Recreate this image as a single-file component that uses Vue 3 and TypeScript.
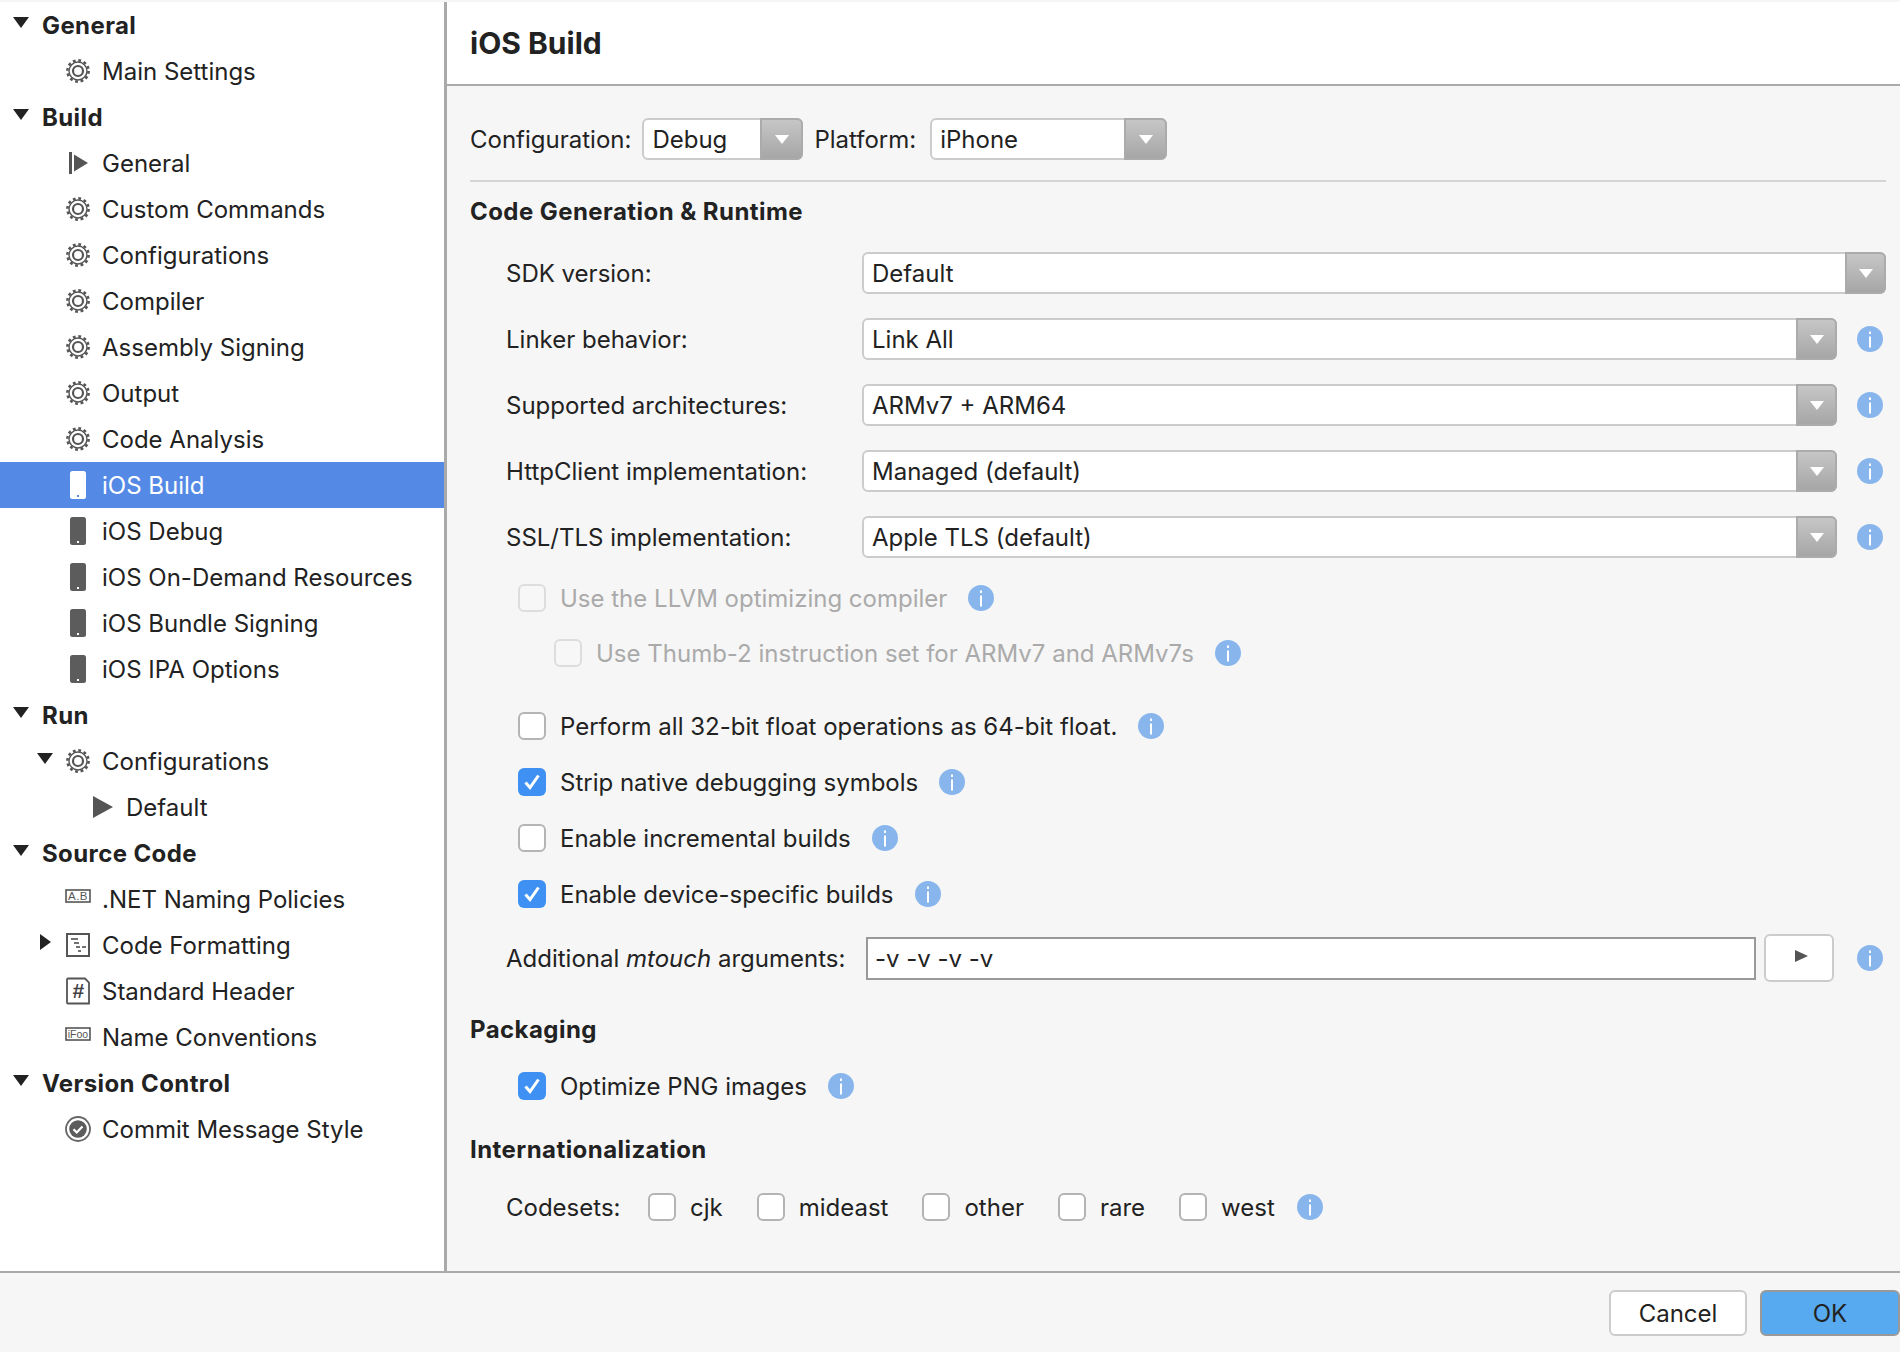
<script setup lang="ts">
type Kind = 'gear' | 'build' | 'phone' | 'play' | 'ab' | 'fmt' | 'hash' | 'foo' | 'commit'
interface Row {
  label: string
  head?: boolean
  icon?: Kind
  caret?: 'down' | 'right'
  selected?: boolean
  deep?: boolean
}
const tree: Row[] = [
  { label: 'General', head: true },
  { label: 'Main Settings', icon: 'gear' },
  { label: 'Build', head: true },
  { label: 'General', icon: 'build' },
  { label: 'Custom Commands', icon: 'gear' },
  { label: 'Configurations', icon: 'gear' },
  { label: 'Compiler', icon: 'gear' },
  { label: 'Assembly Signing', icon: 'gear' },
  { label: 'Output', icon: 'gear' },
  { label: 'Code Analysis', icon: 'gear' },
  { label: 'iOS Build', icon: 'phone', selected: true },
  { label: 'iOS Debug', icon: 'phone' },
  { label: 'iOS On-Demand Resources', icon: 'phone' },
  { label: 'iOS Bundle Signing', icon: 'phone' },
  { label: 'iOS IPA Options', icon: 'phone' },
  { label: 'Run', head: true },
  { label: 'Configurations', icon: 'gear', caret: 'down' },
  { label: 'Default', icon: 'play', deep: true },
  { label: 'Source Code', head: true },
  { label: '.NET Naming Policies', icon: 'ab' },
  { label: 'Code Formatting', icon: 'fmt', caret: 'right' },
  { label: 'Standard Header', icon: 'hash' },
  { label: 'Name Conventions', icon: 'foo' },
  { label: 'Version Control', head: true },
  { label: 'Commit Message Style', icon: 'commit' },
]
const selects = [
  { label: 'SDK version:', value: 'Default', info: false },
  { label: 'Linker behavior:', value: 'Link All', info: true },
  { label: 'Supported architectures:', value: 'ARMv7 + ARM64', info: true },
  { label: 'HttpClient implementation:', value: 'Managed (default)', info: true },
  { label: 'SSL/TLS implementation:', value: 'Apple TLS (default)', info: true },
]
const checks = [
  { label: 'Perform all 32-bit float operations as 64-bit float.', on: false },
  { label: 'Strip native debugging symbols', on: true },
  { label: 'Enable incremental builds', on: false },
  { label: 'Enable device-specific builds', on: true },
]
const codesets = ['cjk', 'mideast', 'other', 'rare', 'west']
</script>

<template>
  <div class="app">
    <div class="strip"></div>
    <div class="body">
      <nav class="side">
        <div
          v-for="(r, i) in tree"
          :key="i"
          class="row"
          :class="{ head: r.head, sel: r.selected, child: !r.head && !r.caret && !r.deep, withcaret: r.caret, deep: r.deep }"
        >
          <svg v-if="r.head || r.caret === 'down'" class="caret" viewBox="0 0 16 11"><path d="M0 0h16L8 11z" /></svg>
          <svg v-else-if="r.caret === 'right'" class="caret caret-r" viewBox="0 0 11 16"><path d="M0 0l11 8L0 16z" /></svg>

          <svg v-if="r.icon === 'gear'" class="ic" viewBox="0 0 26 26">
            <circle cx="13" cy="13" r="10.6" fill="none" stroke="#555" stroke-width="2.6" stroke-dasharray="2.8 2.75" />
            <circle cx="13" cy="13" r="9" fill="#fff" stroke="#555" stroke-width="1.4" />
            <circle cx="13" cy="13" r="5" fill="none" stroke="#555" stroke-width="2.2" />
          </svg>
          <svg v-else-if="r.icon === 'build'" class="ic" viewBox="0 0 26 26">
            <rect x="4" y="2" width="3" height="22" fill="#555" />
            <path d="M9 4.5L23 13L9 21.5z" fill="#555" />
          </svg>
          <svg v-else-if="r.icon === 'phone'" class="ic ic-phone" viewBox="0 0 16 28">
            <rect width="16" height="28" rx="2.5" :fill="r.selected ? '#fff' : '#5c5c5c'" />
            <rect x="7" y="24" width="2" height="2" :fill="r.selected ? '#548ae6' : '#fff'" />
          </svg>
          <svg v-else-if="r.icon === 'play'" class="ic-play" viewBox="0 0 20 22"><path d="M0 0l20 11L0 22z" fill="#555" /></svg>
          <svg v-else-if="r.icon === 'ab'" class="ic ic-wide" viewBox="0 0 26 14">
            <rect x="1" y="1" width="24" height="12" fill="#fff" stroke="#555" stroke-width="1.6" />
            <text x="13" y="11" text-anchor="middle" class="tiny">A.B</text>
          </svg>
          <svg v-else-if="r.icon === 'foo'" class="ic ic-wide" viewBox="0 0 26 14">
            <rect x="1" y="1" width="24" height="12" fill="#fff" stroke="#555" stroke-width="1.6" />
            <text x="13" y="10.500" text-anchor="middle" class="tiny tiny-foo">iFoo</text>
          </svg>
          <svg v-else-if="r.icon === 'fmt'" class="ic" viewBox="0 0 26 26">
            <rect x="2" y="2" width="22" height="22" fill="#fff" stroke="#555" stroke-width="2" />
            <path d="M6 7h7M9 11h5M11 15h4M17 15h4M13 19h3" stroke="#444" stroke-width="1.6" fill="none" />
          </svg>
          <svg v-else-if="r.icon === 'hash'" class="ic ic-doc" viewBox="0 0 26 28">
            <path d="M3 1.5h17l4 4v21H3a1 1 0 0 1-1-1V2.500a1 1 0 0 1 1-1z" fill="#fff" stroke="#555" stroke-width="1.8" />
            <text x="13" y="21" text-anchor="middle" class="hash">#</text>
          </svg>
          <svg v-else-if="r.icon === 'commit'" class="ic" viewBox="0 0 26 26">
            <circle cx="13" cy="13" r="12" fill="#fff" stroke="#666" stroke-width="1.8" />
            <circle cx="13" cy="13" r="8.8" fill="#5c5c5c" />
            <path d="M8.500 13.200l3.200 3.200 5.800-6" fill="none" stroke="#fff" stroke-width="2.200" />
          </svg>

          <span class="txt">{{ r.label }}</span>
        </div>
      </nav>

      <main class="main">
        <header class="title">iOS Build</header>

        <div class="toolbar">
          <span>Configuration:</span>
          <div class="select sel-debug">
            <span class="val">Debug</span>
            <span class="arrow"><i></i></span>
          </div>
          <span class="plat">Platform:</span>
          <div class="select sel-iphone">
            <span class="val">iPhone</span>
            <span class="arrow"><i></i></span>
          </div>
        </div>
        <hr class="divider" />

        <h2 class="section first">Code Generation &amp; Runtime</h2>
        <div class="selects">
          <div v-for="s in selects" :key="s.label" class="srow">
            <label>{{ s.label }}</label>
            <div class="select" :class="{ span2: !s.info }">
              <span class="val">{{ s.value }}</span>
              <span class="arrow"><i></i></span>
            </div>
            <span v-if="s.info" class="info-cell">
              <svg class="info" viewBox="0 0 26 26"><circle cx="13" cy="13" r="13" fill="#88b6ec" /><rect x="12" y="10.500" width="2" height="11" fill="#fff" /><rect x="12" y="5.500" width="2" height="2.500" fill="#fff" /></svg>
            </span>
          </div>
        </div>

        <div class="check dis top1">
          <span class="box"></span><span>Use the LLVM optimizing compiler</span>
          <svg class="info" viewBox="0 0 26 26"><circle cx="13" cy="13" r="13" fill="#88b6ec" /><rect x="12" y="10.500" width="2" height="11" fill="#fff" /><rect x="12" y="5.500" width="2" height="2.500" fill="#fff" /></svg>
        </div>
        <div class="check dis nested">
          <span class="box"></span><span>Use Thumb-2 instruction set for ARMv7 and ARMv7s</span>
          <svg class="info" viewBox="0 0 26 26"><circle cx="13" cy="13" r="13" fill="#88b6ec" /><rect x="12" y="10.500" width="2" height="11" fill="#fff" /><rect x="12" y="5.500" width="2" height="2.500" fill="#fff" /></svg>
        </div>

        <div class="checks">
          <div v-for="c in checks" :key="c.label" class="check">
            <span class="box" :class="{ on: c.on }">
              <svg v-if="c.on" viewBox="0 0 28 28"><path d="M7.500 14.500l4.500 5L20.500 7.500" fill="none" stroke="#fff" stroke-width="3" /></svg>
            </span>
            <span>{{ c.label }}</span>
            <svg class="info" viewBox="0 0 26 26"><circle cx="13" cy="13" r="13" fill="#88b6ec" /><rect x="12" y="10.500" width="2" height="11" fill="#fff" /><rect x="12" y="5.500" width="2" height="2.500" fill="#fff" /></svg>
          </div>
        </div>

        <div class="mtouch">
          <label>Additional <em>mtouch</em> arguments:</label>
          <div class="input">-v -v -v -v</div>
          <div class="runbtn"><svg viewBox="0 0 13 12"><path d="M0 0l13 6L0 12z" fill="#555" /></svg></div>
          <svg class="info" viewBox="0 0 26 26"><circle cx="13" cy="13" r="13" fill="#88b6ec" /><rect x="12" y="10.500" width="2" height="11" fill="#fff" /><rect x="12" y="5.500" width="2" height="2.500" fill="#fff" /></svg>
        </div>

        <h2 class="section packaging">Packaging</h2>
        <div class="check optimize">
          <span class="box on"><svg viewBox="0 0 28 28"><path d="M7.500 14.500l4.500 5L20.500 7.500" fill="none" stroke="#fff" stroke-width="3" /></svg></span>
          <span>Optimize PNG images</span>
          <svg class="info" viewBox="0 0 26 26"><circle cx="13" cy="13" r="13" fill="#88b6ec" /><rect x="12" y="10.500" width="2" height="11" fill="#fff" /><rect x="12" y="5.500" width="2" height="2.500" fill="#fff" /></svg>
        </div>

        <h2 class="section intl">Internationalization</h2>
        <div class="codesets">
          <span class="cs-label">Codesets:</span>
          <div v-for="c in codesets" :key="c" class="cs">
            <span class="box"></span><span>{{ c }}</span>
          </div>
          <svg class="info" viewBox="0 0 26 26"><circle cx="13" cy="13" r="13" fill="#88b6ec" /><rect x="12" y="10.500" width="2" height="11" fill="#fff" /><rect x="12" y="5.500" width="2" height="2.500" fill="#fff" /></svg>
        </div>
      </main>
    </div>

    <footer class="footer">
      <button class="btn cancel">Cancel</button>
      <button class="btn ok">OK</button>
    </footer>
  </div>
</template>

<style scoped>
.app {
  width: 1900px;
  height: 1352px;
  display: flex;
  flex-direction: column;
  background: #f6f6f6;
  color: #222;
  font-family: Inter, "Liberation Sans", sans-serif;
  font-size: 24px;
  overflow: hidden;
}
.strip { height: 2px; flex: none; background: #f6f6f6; }
.body { flex: 1; display: flex; min-height: 0; }
.side {
  width: 447px;
  flex: none;
  box-sizing: border-box;
  background: #fff;
  border-right: 3px solid #aaa;
}
.row {
  height: 46px;
  display: flex;
  align-items: center;
  box-sizing: border-box;
  padding-left: 13px;
}
.head { font-weight: 700; letter-spacing: 0.4px; }
.child { padding-left: 65px; }
.withcaret { padding-left: 37px; }
.deep { padding-left: 93px; }
.sel { background: #548ae6; color: #fff; }
.caret { width: 16px; height: 11px; margin: -6px 13px 0 0; fill: #222; flex: none; }
.caret-r { width: 11px; height: 16px; margin: -6px 15px 0 3px; }
.withcaret .caret { margin-right: 12px; }
.withcaret .caret-r { margin-right: 14px; }
.ic { width: 26px; height: 26px; margin-right: 11px; flex: none; }
.ic-wide { height: 14px; margin-top: -6px; }
.ic-doc { height: 28px; }
.ic-phone { width: 16px; height: 28px; margin: 0 16px 0 5px; }
.ic-play { width: 20px; height: 22px; margin-right: 14px; flex: none; }
.deep .ic-play { margin-right: 13px; }
.tiny { font-size: 11.5px; fill: #555; font-family: "Liberation Sans", sans-serif; letter-spacing: 0.500px; }
.tiny-foo { font-size: 10.5px; letter-spacing: 0; }
.hash { font-size: 21px; font-weight: 700; font-style: italic; fill: #444; font-family: "Liberation Sans", sans-serif; }
.txt { white-space: nowrap; }

.main { flex: 1; min-width: 0; display: flex; flex-direction: column; }
.title {
  height: 84px;
  flex: none;
  box-sizing: border-box;
  background: #fff;
  border-bottom: 2px solid #aaa;
  padding-left: 23px;
  font-size: 30px;
  font-weight: 700;
  line-height: 82px;
}
.toolbar {
  margin: 32px 0 0 23px;
  height: 42px;
  display: flex;
  align-items: center;
}
.select {
  height: 42px;
  box-sizing: border-box;
  background: #fff;
  border: 2px solid #ccc;
  border-radius: 6px;
  display: flex;
  align-items: center;
  padding-left: 8px;
  position: relative;
}
.val { flex: 1; white-space: nowrap; }
.arrow {
  width: 41px;
  height: 42px;
  margin: 0 -2px 0 0;
  flex: none;
  box-sizing: border-box;
  background: linear-gradient(#c6c6c6, #a6a6a6);
  border: 2px solid #ababab;
  border-radius: 0 6px 6px 0;
  display: flex;
  align-items: center;
  justify-content: center;
}
.toolbar .arrow { width: 43px; }
.arrow i {
  width: 0;
  height: 0;
  border-left: 7px solid transparent;
  border-right: 7px solid transparent;
  border-top: 9px solid #fff;
}
.sel-debug { width: 161px; margin-left: 11px; }
.plat { margin-left: 11px; }
.sel-iphone { width: 237px; margin-left: 14px; }
.divider {
  margin: 20px 14px 0 23px;
  border: 0;
  height: 2px;
  background: #d4d4d4;
}
.section {
  margin: 0 0 0 23px;
  height: 30px;
  font-size: 24px;
  line-height: 30px;
  font-weight: 700;
  letter-spacing: 0.44px;
}
.first { margin-top: 15px; }
.selects {
  margin: 25px 14px 0 59px;
  display: flex;
  flex-direction: column;
  gap: 24px;
}
.srow {
  display: grid;
  grid-template-columns: 356px 1fr 49px;
  align-items: center;
}
.span2 { grid-column: 2 / 4; }
.info-cell { display: flex; justify-content: flex-end; padding-right: 3px; }
.info { width: 26px; height: 26px; flex: none; }
.check {
  height: 30px;
  margin-left: 71px;
  display: flex;
  align-items: center;
}
.check .info { margin-left: 21px; }
.box {
  width: 28px;
  height: 28px;
  flex: none;
  box-sizing: border-box;
  background: #fff;
  border: 2px solid #b4b4b4;
  border-radius: 6px;
  margin-right: 14px;
}
.box.on { background: #3e91f2; border: 0; }
.box svg { display: block; width: 28px; height: 28px; }
.dis { color: #aaa; }
.dis .box { background: #f7f7f7; border-color: #ddd; }
.top1 { margin-top: 25px; }
.nested { margin-top: 25px; margin-left: 107px; }
.checks { margin-top: 43px; display: flex; flex-direction: column; gap: 26px; }
.mtouch {
  margin: 25px 0 0 59px;
  height: 48px;
  display: flex;
  align-items: center;
}
.mtouch label { width: 360px; flex: none; white-space: nowrap; }
.input {
  width: 890px;
  height: 43px;
  flex: none;
  box-sizing: border-box;
  background: #fff;
  border: 2px solid #999;
  padding-left: 7px;
  line-height: 39px;
}
.runbtn {
  width: 70px;
  height: 48px;
  flex: none;
  box-sizing: border-box;
  margin-left: 8px;
  background: #fff;
  border: 2px solid #ccc;
  border-radius: 6px;
  display: flex;
  align-items: center;
  justify-content: center;
}
.runbtn svg { width: 13px; height: 12px; margin: -4px 0 0 5px; }
.mtouch .info { margin-left: 23px; }
.packaging { margin-top: 33px; }
.optimize { margin-top: 26px; }
.intl { margin-top: 34px; }
.codesets {
  margin: 27px 0 0 59px;
  height: 30px;
  display: flex;
  align-items: center;
}
.cs-label { width: 142px; flex: none; }
.cs { display: flex; align-items: center; margin-right: 34px; }
.codesets .info { margin-left: -12px; }

.footer {
  height: 81px;
  flex: none;
  box-sizing: border-box;
  border-top: 2px solid #aaa;
  padding-top: 17px;
  display: flex;
  justify-content: flex-end;
  gap: 13px;
}
.btn {
  height: 46px;
  box-sizing: border-box;
  font: inherit;
  color: #222;
  border-radius: 6px;
  padding: 0;
}
.cancel { width: 138px; background: #fff; border: 2px solid #ccc; }
.ok { width: 140px; background: #57aaf0; border: 2px solid #999; }
</style>
